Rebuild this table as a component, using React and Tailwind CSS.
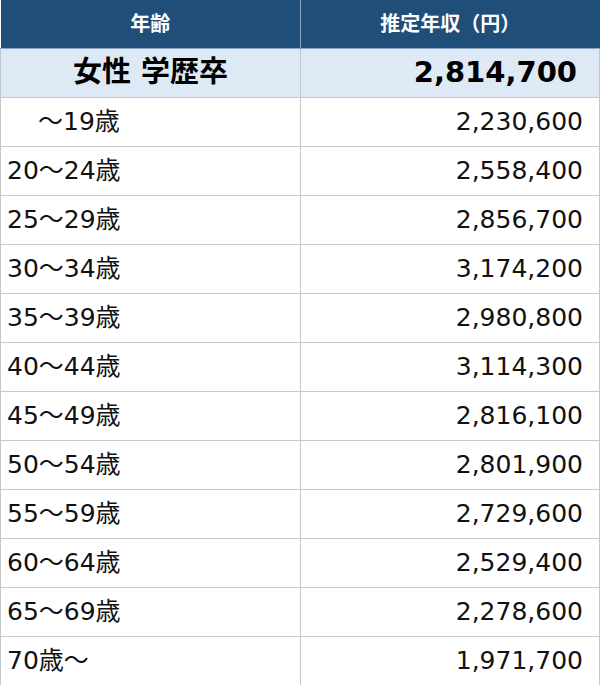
const ROWS = [
  ['〜19歳', '2,230,600', true],
  ['20〜24歳', '2,558,400'],
  ['25〜29歳', '2,856,700'],
  ['30〜34歳', '3,174,200'],
  ['35〜39歳', '2,980,800'],
  ['40〜44歳', '3,114,300'],
  ['45〜49歳', '2,816,100'],
  ['50〜54歳', '2,801,900'],
  ['55〜59歳', '2,729,600'],
  ['60〜64歳', '2,529,400'],
  ['65〜69歳', '2,278,600'],
  ['70歳〜', '1,971,700'],
]

export default function App() {
  return (
    <div
      className="w-[600px] h-[685px] bg-white text-[#111]"
      style={{ fontFamily: '"DejaVu Sans", "Noto Sans CJK JP", sans-serif' }}
    >
      <table className="w-[600px] table-fixed border-collapse">
        <thead>
          <tr className="h-[48px] bg-[#1f4e79] text-white">
            <th className="w-[300px] border-r border-b border-[#8aa6c4] text-[20px] font-semibold">年齢</th>
            <th className="border-b border-[#8aa6c4] text-[20px] font-semibold">推定年収（円）</th>
          </tr>
        </thead>
        <tbody>
          {/* total row */}
          <tr className="h-[49px] bg-[#dde9f5]">
            <td className="border border-[#bfc6cf] text-center text-[29px] font-bold text-black">女性 学歴卒</td>
            <td className="border border-[#bfc6cf] pr-[22px] text-right text-[29px] font-bold text-black">2,814,700</td>
          </tr>
          {ROWS.map(([age, pay, indent]) => (
            <tr key={age} className="h-[49px]">
              <td className={indent ? 'border border-[#c8c8c8] pl-[37px] text-left text-[25px] leading-none' : 'border border-[#c8c8c8] pl-[6px] text-left text-[25px] leading-none'}>{age}</td>
              <td className="border border-[#c8c8c8] pr-[16px] text-right text-[25px] leading-none">{pay}</td>
            </tr>
          ))}
        </tbody>
      </table>
    </div>
  )
}
